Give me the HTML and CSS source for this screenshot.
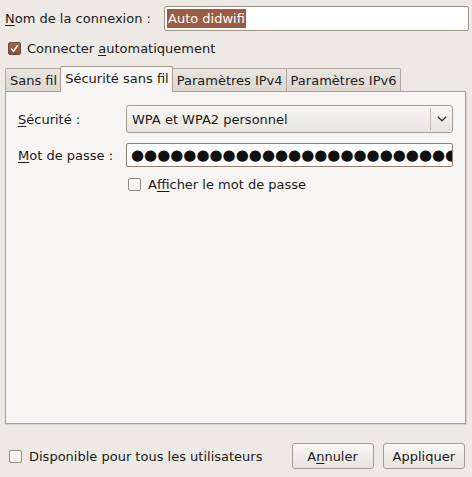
FILE: index.html
```html
<!DOCTYPE html>
<html>
<head>
<meta charset="utf-8">
<link rel="stylesheet" href="styles.css">
</head>
<body>
<div class="win">
  <div class="row-name">
    <label class="lbl-name"><u>N</u>om de la connexion :</label>
    <div class="entry name-entry"><span class="sel">Auto didwifi</span></div>
  </div>
  <div class="row-auto">
    <span class="check checked"><svg width="9" height="9" viewBox="0 0 9 9"><polyline points="1.2,4.6 3.6,7.2 7.8,1.4" fill="none" stroke="#fff" stroke-width="1.6"/></svg></span>
    <span>Connecter <u>a</u>utomatiquement</span>
  </div>
  <div class="tabs">
    <div class="tab">Sans fil</div>
    <div class="tab active">Sécurité sans fil</div>
    <div class="tab">Paramètres IPv4</div>
    <div class="tab">Paramètres IPv6</div>
  </div>
  <div class="panel">
    <div class="form">
      <label class="flabel"><u>S</u>écurité :</label>
      <div class="combo">
        <span class="combo-text">WPA et WPA2 personnel</span>
        <span class="combo-sep"></span>
        <span class="combo-arrow"><svg width="10" height="6" viewBox="0 0 10 6"><polyline points="0.8,0.8 5,4.8 9.2,0.8" fill="none" stroke="#3a3a3a" stroke-width="1.3"/></svg></span>
      </div>
      <label class="flabel"><u>M</u>ot de passe :</label>
      <div class="entry pw"><span class="dots">●●●●●●●●●●●●●●●●●●●●●●●●●●●●●●●●●</span></div>
      <span></span>
      <div class="show"><span class="check"></span><span>A<u>ff</u>icher le mot de passe</span></div>
    </div>
  </div>
  <div class="bottom">
    <div class="avail"><span class="check"></span><span>Disponible pour tous les utilisateurs</span></div>
    <div class="buttons">
      <button class="btn">A<u>n</u>nuler</button>
      <button class="btn">Appliquer</button>
    </div>
  </div>
</div>
</body>
</html>
```
FILE: styles.css
```css
* { box-sizing: border-box; }
html, body { margin: 0; padding: 0; }
body {
  width: 472px;
  height: 477px;
  overflow: hidden;
  background: #edeae6;
  font-family: "DejaVu Sans", sans-serif;
  font-size: 13px;
  color: #1a1a1a;
}
u { text-decoration-thickness: 1px; text-underline-offset: 2px; }
.win { display: flex; flex-direction: column; height: 477px; }

.row-name { display: flex; align-items: center; margin: 6px 3px 0 5px; height: 25px; }
.lbl-name { width: 159px; }
.entry {
  background: #fff;
  border: 1px solid #a29383;
  border-radius: 2px;
  display: flex;
  align-items: center;
  overflow: hidden;
  white-space: nowrap;
}
.name-entry { flex: 1; height: 25px; padding-left: 2px; }
.sel { background: #9a5c42; color: #fff; line-height: 19px; padding: 0 1px; }

.row-auto { display: flex; align-items: center; gap: 6px; margin: 11px 0 0 8px; height: 13px; }

.check {
  width: 13px;
  height: 13px;
  flex: none;
  border: 1px solid #968b80;
  border-radius: 2px;
  background: linear-gradient(#ffffff, #f1eeea);
  display: flex;
  align-items: center;
  justify-content: center;
}
.check.checked {
  border-color: #6f4b39;
  background: linear-gradient(#9a6750, #7e5440);
}

.tabs { display: flex; align-items: flex-end; margin: 11px 0 0 5px; height: 25px; }
.tab {
  height: 23px;
  padding: 0 3px 0 4px;
  margin-right: -1px;
  border: 1px solid #b3a79b;
  border-bottom: none;
  border-radius: 2px 2px 0 0;
  background: linear-gradient(#e9e5e0, #dcd6cf);
  display: flex;
  align-items: center;
  white-space: nowrap;
}
.tab.active {
  position: relative;
  z-index: 1;
  height: 26px;
  margin-bottom: -1px;
  padding-bottom: 3px;
  border-color: #aa9d90;
  background: #f7f5f3;
}

.panel {
  margin: 0 6px 0 5px;
  height: 333px;
  background: #f7f5f3;
  border: 1px solid #aa9d90;
  box-shadow: 1px 1px 0 #d9d3cc;
}
.form {
  display: grid;
  grid-template-columns: 108px 1fr;
  grid-template-rows: 28px 24px 13px;
  row-gap: 10px;
  padding: 13px 12px 0 12px;
  align-items: center;
}
.flabel { white-space: nowrap; }
.combo {
  height: 28px;
  display: flex;
  align-items: center;
  border: 1px solid #a69c91;
  border-radius: 3px;
  background: linear-gradient(#f7f6f4, #e9e5e0);
}
.combo-text { flex: 1; padding-left: 5px; }
.combo-sep { width: 1px; height: 22px; background: #c3bab0; }
.combo-arrow { width: 21px; display: flex; justify-content: center; align-items: center; }

.pw { height: 24px; border-color: #8e8174; padding-left: 4px; }
.dots { font-size: 15px; line-height: 20px; color: #111; }

.show { display: flex; align-items: center; gap: 7px; margin-top: 1px; margin-left: 2px; }

.bottom {
  display: flex;
  align-items: center;
  justify-content: space-between;
  margin: 19px 7px 0 9px;
  height: 26px;
}
.avail { display: flex; align-items: center; gap: 7px; }
.buttons { display: flex; gap: 9px; }
.btn {
  height: 26px;
  min-width: 82px;
  padding: 0 9px;
  border: 1px solid #a69b90;
  border-radius: 3px;
  background: linear-gradient(#f9f8f6, #e7e2dd);
  font-family: "DejaVu Sans", sans-serif;
  font-size: 13px;
  color: #1a1a1a;
}
```
